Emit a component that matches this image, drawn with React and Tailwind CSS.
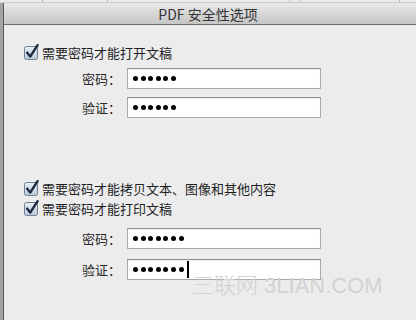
import React from 'react';

const CheckBox = () => (
  <svg width="17" height="17" viewBox="0 0 17 17" className="shrink-0">
    <defs>
      <linearGradient id="cbfill" x1="0" y1="0" x2="0" y2="1">
        <stop offset="0" stopColor="#e6eef5" />
        <stop offset="1" stopColor="#b9cbdb" />
      </linearGradient>
    </defs>
    <rect x="0.5" y="2.5" width="13" height="13" rx="2" fill="url(#cbfill)" stroke="#6f7f90" />
    <path d="M3.2 8.6 L6.2 12.6 L13.6 1.2" fill="none" stroke="#1c2741" strokeWidth="2.4" strokeLinecap="round" strokeLinejoin="round" />
  </svg>
);

const Dots = ({ count, cursor }) => (
  <div className="flex items-center gap-[2.6px] pl-[5px]">
    {Array.from({ length: count }).map((_, i) => (
      <span key={i} className="w-[5px] h-[5px] rounded-full bg-black" />
    ))}
    {cursor && <span className="w-[1.5px] h-[17px] bg-black ml-[1px]" />}
  </div>
);

const Field = ({ label, count, cursor }) => (
  <div className="flex items-center">
    <span className="w-[45px] pl-[82px] box-content text-[13px] leading-none text-[#2a2a2a]">{label}</span>
    <div className="w-[194px] h-[21px] flex items-center bg-white border border-[#a9a9a9] border-t-[#8f8f8f] shadow-[inset_0_1px_1px_rgba(0,0,0,0.08)]">
      <Dots count={count} cursor={cursor} />
    </div>
  </div>
);

const Option = ({ text }) => (
  <div className="flex items-center h-[20px] pl-[24px] gap-[1px]">
    <CheckBox />
    <span className="text-[13px] leading-none text-[#1f1f1f]">{text}</span>
  </div>
);

export default function App() {
  return (
    <div
      className="w-[416px] h-[320px] relative overflow-hidden bg-[#ececec] flex flex-col"
      style={{ fontFamily: '"Noto Sans CJK SC", "Noto Sans", sans-serif' }}
    >
      {/* window behind the sheet */}
      <div className="h-[3px] bg-[#ebebeb] flex border-b border-[#c9c9c9]">
        <div className="w-[43px] border-r border-[#b8b8b8]" />
        <div className="w-[65px] border-r border-[#b8b8b8]" />
        <div className="w-[182px] border-r border-[#c4c4c4]" />
        <div className="w-[10px] border-r border-[#c4c4c4]" />
        <div className="w-[100px] border-r border-[#b8b8b8]" />
      </div>

      <div className="flex flex-1">
        <div className="w-[4px] bg-[#a3a3a3] border-r border-[#5a5a5a]" />

        <div className="flex-1 flex flex-col">
          <div className="h-[22px] flex items-center justify-center bg-gradient-to-b from-[#e9e9e9] to-[#c6c6c6] border-b border-[#6e6e6e]">
            <span className="text-[14px] leading-none text-[#333] pr-[4px]">PDF 安全性选项</span>
          </div>

          <div className="flex-1 flex flex-col pt-[17px] -ml-[4px]">
            <Option text="需要密码才能打开文稿" />
            <div className="flex flex-col gap-[8px] mt-[6px]">
              <Field label="密码：" count={6} />
              <Field label="验证：" count={6} />
            </div>

            <div className="mt-[60px]">
              <Option text="需要密码才能拷贝文本、图像和其他内容" />
              <Option text="需要密码才能打印文稿" />
            </div>
            <div className="flex flex-col gap-[10px] mt-[10px]">
              <Field label="密码：" count={7} />
              <Field label="验证：" count={7} cursor />
            </div>
          </div>
        </div>
      </div>

      {/* watermark */}
      <div
        className="absolute left-[192px] top-[275px] text-[22px] leading-none font-light text-[#d2d2d2] whitespace-nowrap"
        style={{ fontFamily: '"Liberation Sans", "Noto Sans CJK SC", sans-serif' }}
      >
        三联网 3LIAN.COM
      </div>
    </div>
  );
}
